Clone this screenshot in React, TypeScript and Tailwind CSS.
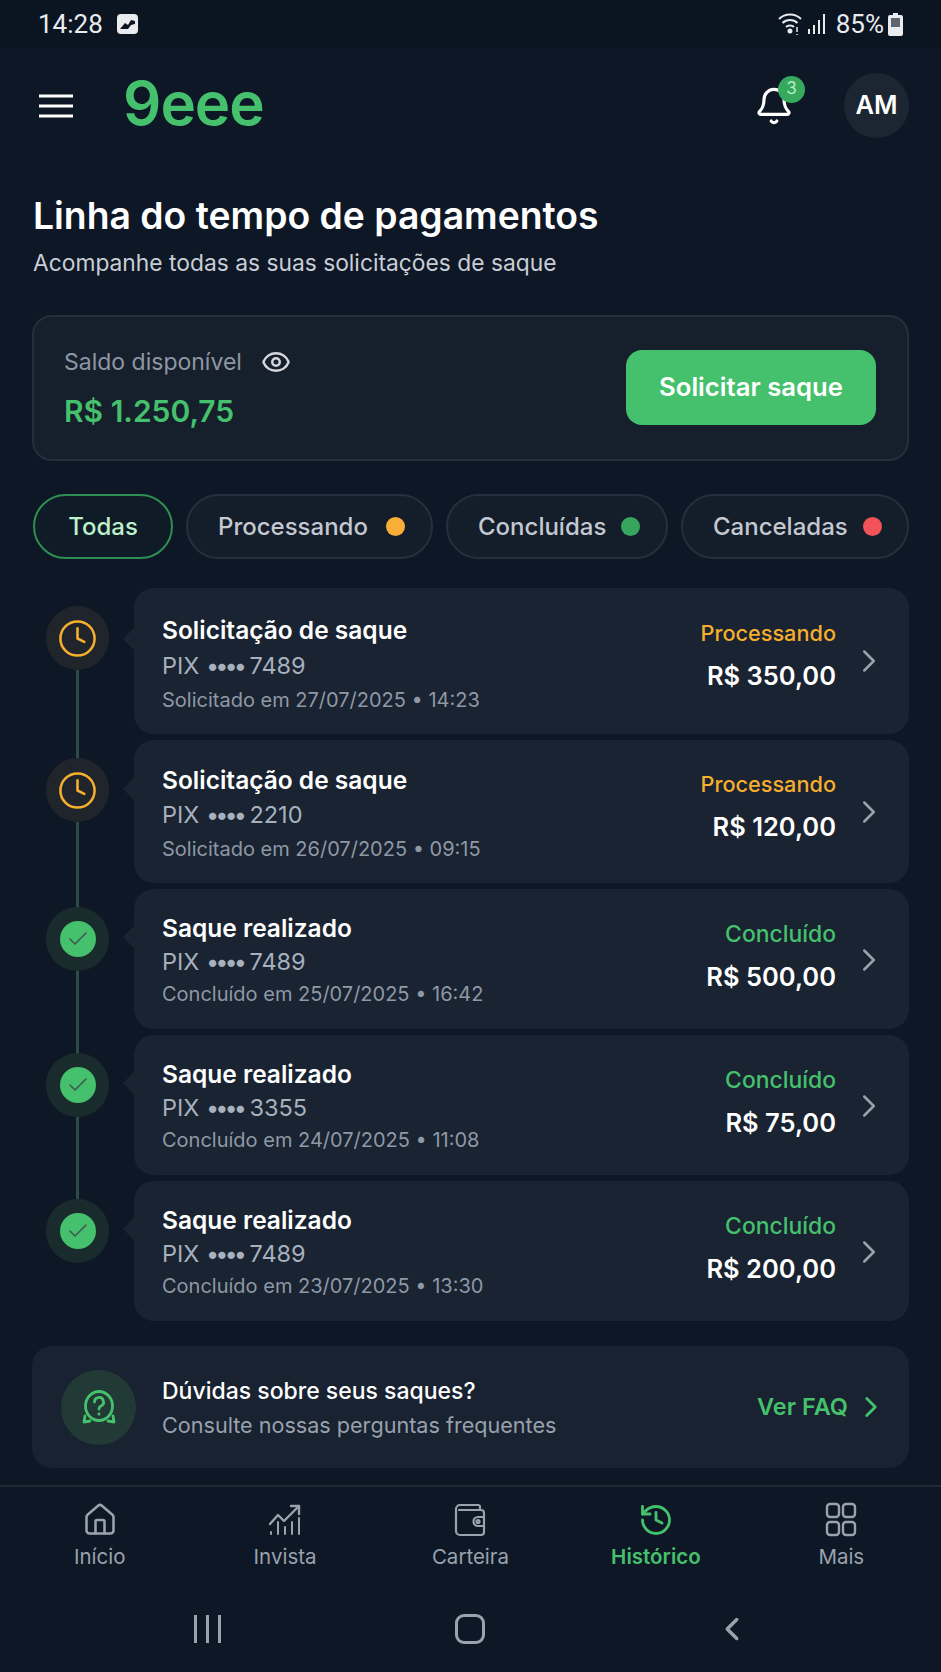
import { Bell, Check, ChevronLeft, ChevronRight, Clock, Eye, History, House } from "lucide-react"

const withdrawals = [
  { title: "Solicitação de saque", last: "7489", date: "Solicitado em 27/07/2025 • 14:23", amount: "R$ 350,00", done: false, box: "h-[146px] pt-[25px] leading-[35px]", notch: "top-[43px]", right: "-mt-[1px]", chev: "mt-[29px]" },
  { title: "Solicitação de saque", last: "2210", date: "Solicitado em 26/07/2025 • 09:15", amount: "R$ 120,00", done: false, box: "h-[143px] pt-[23px] leading-[34.5px]", notch: "top-[41px]", right: "mt-0", chev: "mt-[30px]" },
  { title: "Saque realizado", last: "7489", date: "Concluído em 25/07/2025 • 16:42", amount: "R$ 500,00", done: true, box: "h-[140px] pt-[23px] leading-[33px]", notch: "top-[40px]", right: "mt-[1px]", chev: "mt-[29px]" },
  { title: "Saque realizado", last: "3355", date: "Concluído em 24/07/2025 • 11:08", amount: "R$ 75,00", done: true, box: "h-[140px] pt-[23px] leading-[33px]", notch: "top-[40px]", right: "mt-[1px]", chev: "mt-[29px]" },
  { title: "Saque realizado", last: "7489", date: "Concluído em 23/07/2025 • 13:30", amount: "R$ 200,00", done: true, box: "h-[140px] pt-[23px] leading-[33px]", notch: "top-[40px]", right: "mt-[1px]", chev: "mt-[29px]" },
]

const ChartIcon = () => (
  <svg width="36" height="36" viewBox="0 0 36 36" fill="none" stroke="currentColor" strokeWidth="2" strokeLinecap="round" strokeLinejoin="round">
    <path d="M3 22l8-9 6 6L32 4" strokeWidth="2.4" />
    <path d="M24 4h8v8" strokeWidth="2.4" />
    <path d="M32 16v16M25 20v12M18 25v7M11 20v12M4 30v2" />
  </svg>
)

const WalletIcon = () => (
  <svg width="36" height="36" viewBox="0 0 36 36" fill="none" stroke="currentColor" strokeWidth="2.2" strokeLinecap="round" strokeLinejoin="round">
    <path d="M28 8V5a2 2 0 0 0-2-2H8a4 4 0 0 0-4 4v22a4 4 0 0 0 4 4h21a3 3 0 0 0 3-3V11a3 3 0 0 0-3-3H7" />
    <path d="M32 15h-6a4 4 0 0 0 0 9h6" />
    <circle cx="26" cy="19.5" r="1.5" />
  </svg>
)

const GridIcon = () => (
  <svg width="36" height="36" viewBox="0 0 36 36" fill="none" stroke="currentColor" strokeWidth="2.4">
    <rect x="4" y="2" width="12" height="13" rx="3" />
    <rect x="20" y="2" width="12" height="13" rx="3" />
    <rect x="4" y="20" width="12" height="13" rx="3" />
    <rect x="20" y="20" width="12" height="13" rx="3" />
  </svg>
)

const HelpIcon = () => (
  <svg width="36" height="38" viewBox="0 0 36 38" fill="none" stroke="currentColor" strokeWidth="2.8" strokeLinecap="round" strokeLinejoin="round">
    <ellipse cx="18" cy="18" rx="13.5" ry="14.5" />
    <path d="M13.5 14a4.5 4.5 0 1 1 6.5 4c-1.4.8-2 1.5-2 3" />
    <path d="M18 26v.2" />
    <path d="M4 28l-1 6 6-1M32 28l1 6-6-1" />
  </svg>
)

const navItems = [
  { label: "Início", icon: <House size={36} strokeWidth={1.7} /> },
  { label: "Invista", icon: <ChartIcon /> },
  { label: "Carteira", icon: <WalletIcon /> },
  { label: "Histórico", icon: <History size={36} strokeWidth={1.9} />, active: true },
  { label: "Mais", icon: <GridIcon /> },
]

export default function App() {
  return (
    <div className="w-[941px] h-[1672px] overflow-hidden bg-[#0d1725] text-white font-[Inter,sans-serif]">
      {/* Status bar */}
      <div className="h-[48px] bg-[#0b1421] pl-[38px] pr-[38px] flex items-center justify-between text-[#e9ebee] font-[Roboto,sans-serif]">
        <div className="flex items-center gap-[14px]">
          <span className="text-[26px] leading-none">14:28</span>
          <svg width="21" height="20" viewBox="0 0 21 20">
            <rect width="21" height="20" rx="4" fill="#e9ebee" />
            <path d="M3 15l5-6 3 2 3-5 4 1v3l-4 1-3 4H4z" fill="#0b1421" />
          </svg>
        </div>
        <div className="flex items-center">
          <svg width="26" height="24" viewBox="0 0 26 24" fill="none" stroke="#e9ebee" strokeWidth="2">
            <path d="M2 7c6-6 16-6 22 0M5.500 11c4-4 11-4 15 0M9 15c2-2 6-2 8 0" />
            <circle cx="13" cy="19" r="1.500" fill="#e9ebee" />
            <path d="M20 15v5M20 22v1" strokeWidth="1.500" />
          </svg>
          <svg className="ml-[4px]" width="20" height="22" viewBox="0 0 20 22" fill="#e9ebee">
            <path d="M1 16h2v5H1zM6 12h2v9H6zM11 7h2v14h-2zM16 1h2v20h-2z" />
          </svg>
          <span className="ml-[9px] text-[26px] leading-none">85%</span>
          <svg className="ml-[4px]" width="15" height="24" viewBox="0 0 15 24" fill="#e9ebee">
            <path d="M5 1h5v2h3a2 2 0 0 1 2 2v17a2 2 0 0 1-2 2H2a2 2 0 0 1-2-2V5a2 2 0 0 1 2-2h3z" />
            <rect x="3" y="6" width="9" height="9" fill="#5d6672" />
          </svg>
        </div>
      </div>

      <div className="pl-[32px] pr-[32px]">
        {/* Header */}
        <header className="mt-[25px] h-[65px] flex items-center">
          <svg className="ml-[7px]" width="34" height="24" viewBox="0 0 34 24" fill="none" stroke="#fff" strokeWidth="3">
            <path d="M0 2h34M0 12h34M0 22h34" />
          </svg>
          <span className="ml-[50px] -mt-[6px] text-[60px] leading-none font-semibold tracking-[-1px] text-[#45c06c]">9eee</span>
          <div className="relative ml-auto mr-[50px]">
            <Bell size={40} strokeWidth={1.9} className="text-white" />
            <span className="absolute -top-[10px] -right-[11px] w-[27px] h-[27px] rounded-full bg-[#36a95c] flex items-center justify-center text-[17px] text-[#b5ecc7]">3</span>
          </div>
          <div className="w-[65px] h-[65px] rounded-full bg-[#1c2633] flex items-center justify-center text-[25.500px] font-semibold">AM</div>
        </header>

        {/* Title */}
        <h1 className="mt-[56px] ml-[1px] text-[37.300px] leading-[44px] font-semibold">Linha do tempo de pagamentos</h1>
        <p className="mt-[10px] ml-[1px] text-[22.800px] leading-[30px] text-[#c9ced6]">Acompanhe todas as suas solicitações de saque</p>

        {/* Balance */}
        <section className="mt-[37px] h-[146px] rounded-[20px] border-2 border-[#242e3c] bg-[#161f2c] pl-[30px] pr-[31px] flex items-center justify-between">
          <div>
            <div className="flex items-center gap-[19px] text-[#8e96a3]">
              <span className="text-[23px] leading-[32px]">Saldo disponível</span>
              <Eye size={30} strokeWidth={2} className="text-[#d5d8dd]" />
            </div>
            <div className="mt-[14px] text-[30px] leading-[38px] font-semibold text-[#45c06c]">R$ 1.250,75</div>
          </div>
          <button className="-mt-[2px] w-[250px] h-[75px] rounded-[16px] bg-[#45c06c] text-[25.700px] font-semibold text-white">Solicitar saque</button>
        </section>

        {/* Filters */}
        <div className="mt-[33px] ml-[1px] flex gap-[13px] text-[24px] font-medium text-[#c3c8d1]">
          <div className="w-[140px] h-[65px] rounded-full border-2 border-[#2f8f52] bg-[#0f1c28] flex items-center justify-center text-[#bdf0cb]">Todas</div>
          <div className="w-[247px] h-[65px] rounded-full border-2 border-[#252f3d] bg-[#141d2a] pl-[30px] flex items-center gap-[18px]">
            Processando
            <span className="w-[19px] h-[19px] rounded-full bg-[#f9ae37]" />
          </div>
          <div className="w-[222px] h-[65px] rounded-full border-2 border-[#252f3d] bg-[#141d2a] pl-[30px] flex items-center gap-[15px]">
            Concluídas
            <span className="w-[19px] h-[19px] rounded-full bg-[#37a55d]" />
          </div>
          <div className="w-[228px] h-[65px] rounded-full border-2 border-[#252f3d] bg-[#141d2a] pl-[30px] flex items-center gap-[15px]">
            Canceladas
            <span className="w-[19px] h-[19px] rounded-full bg-[#f2525a]" />
          </div>
        </div>

        {/* Timeline */}
        <div className="mt-[29px] flex flex-col gap-[6px]">
          {withdrawals.map((item, i) => (
            <div key={i} className="flex">
              <div className="w-[102px] pl-[14px] flex flex-col items-start">
                <div className={`mt-[18px] shrink-0 w-[63px] h-[64px] rounded-full flex items-center justify-center ${item.done ? "bg-[#1a2b2d]" : "bg-[#20252c]"}`}>
                  {item.done ? (
                    <span className="w-[36px] h-[36px] rounded-full bg-[#45c06c] flex items-center justify-center">
                      <Check size={24} strokeWidth={1.6} className="text-[#3f5a52]" />
                    </span>
                  ) : (
                    <Clock size={41} strokeWidth={1.5} className="text-[#f6ae2d]" />
                  )}
                </div>
                {i < withdrawals.length - 1 && <div className="ml-[30px] w-[3px] flex-1 -mb-[24px] bg-[#2e4a46]" />}
              </div>
              <div className={`relative flex-1 rounded-[20px] bg-[#192331] pl-[28px] pr-[34px] flex justify-between ${item.box}`}>
                <span className={`absolute -left-[8px] w-[16px] h-[16px] rotate-45 bg-[#192331] ${item.notch}`} />
                <div>
                  <div className="text-[24.500px] font-semibold text-white">{item.title}</div>
                  <div className="text-[23.500px] text-[#a7b0bd]">
                    PIX <span className="tracking-[-4px]">••••</span> {item.last}
                  </div>
                  <div className="text-[20px] text-[#8f98a5]">{item.date}</div>
                </div>
                <div className="flex items-start gap-[27px]">
                  <div className={`text-right ${item.right}`}>
                    <div className={`leading-[42px] font-medium ${item.done ? "text-[22.900px] text-[#45c06c]" : "text-[21.700px] text-[#f6ae2d]"}`}>{item.done ? "Concluído" : "Processando"}</div>
                    <div className="text-[25.500px] leading-[43px] font-semibold text-white">{item.amount}</div>
                  </div>
                  <ChevronRight size={38} strokeWidth={1.6} className={`-mx-[13px] text-[#98a1ad] ${item.chev}`} />
                </div>
              </div>
            </div>
          ))}
        </div>

        {/* FAQ */}
        <section className="mt-[25px] h-[122px] rounded-[20px] bg-[#182230] pl-[29px] pr-[21px] flex items-center">
          <div className="w-[75px] h-[75px] rounded-full bg-[#223a35] flex items-center justify-center text-[#45c06c]">
            <HelpIcon />
          </div>
          <div className="mt-[2px] ml-[26px]">
            <div className="text-[23px] leading-[34px] font-medium text-white">Dúvidas sobre seus saques?</div>
            <div className="text-[21.600px] leading-[34px] text-[#98a1ad]">Consulte nossas perguntas frequentes</div>
          </div>
          <div className="ml-auto flex items-center gap-[6px] text-[23.500px] font-semibold text-[#45c06c]">
            Ver FAQ
            <ChevronRight size={34} strokeWidth={2} />
          </div>
        </section>
      </div>

      {/* Bottom nav */}
      <nav className="mt-[17px] border-t-2 border-[#1f2935] px-[7px] pt-[15px] grid grid-cols-5">
        {navItems.map((item) => (
          <div key={item.label} className={`flex flex-col items-center ${item.active ? "text-[#45c06c]" : "text-[#9aa2ae]"}`}>
            {item.icon}
            <span className={`mt-[4px] text-[20.500px] leading-[30px] ${item.active ? "font-semibold" : ""}`}>{item.label}</span>
          </div>
        ))}
      </nav>

      {/* Android buttons */}
      <div className="mt-[38px] pl-[194px] flex items-center text-[#9aa2ae]">
        <div className="flex gap-[9px]">
          <span className="w-[3px] h-[28px] bg-[#9aa2ae]" />
          <span className="w-[3px] h-[28px] bg-[#9aa2ae]" />
          <span className="w-[3px] h-[28px] bg-[#9aa2ae]" />
        </div>
        <span className="ml-[234px] w-[30px] h-[30px] rounded-[9px] border-[3px] border-[#9aa2ae]" />
        <ChevronLeft className="ml-[228px]" size={38} strokeWidth={2.2} />
      </div>
    </div>
  )
}
